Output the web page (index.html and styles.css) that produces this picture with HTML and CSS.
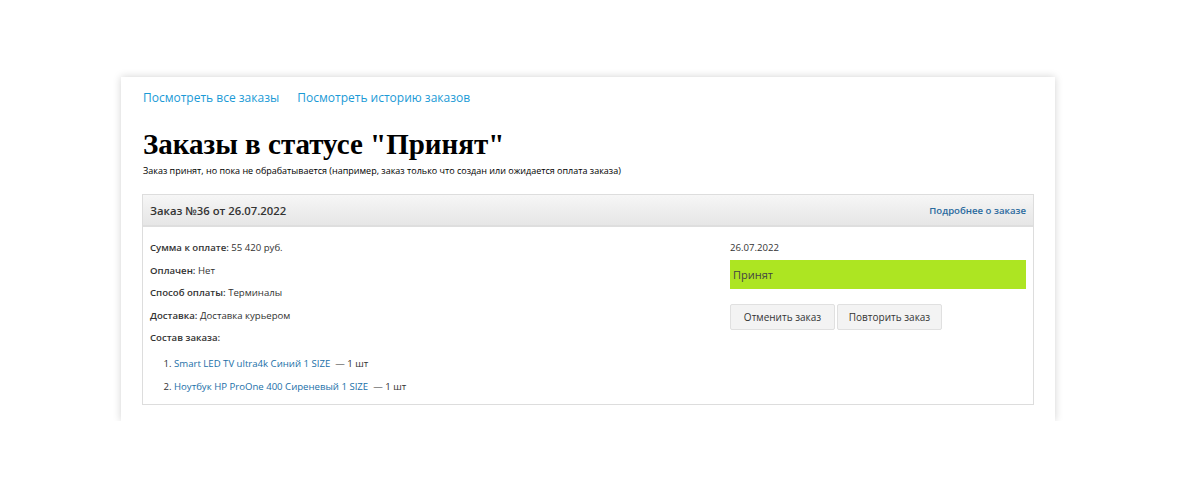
FILE: index.html
```html
<!DOCTYPE html>
<html lang="ru">
<head>
    <meta charset="UTF-8">
    <title>Заказы в статусе "Принят"</title>
    <link rel="stylesheet" href="styles.css">
</head>
<body>

    <div class="page">
        <div class="order-links">
            <a href="#">Посмотреть все заказы</a>
            <a href="#">Посмотреть историю заказов</a>
        </div>

        <h1>Заказы в статусе "Принят"</h1>
        <div class="status-desc">Заказ принят, но пока не обрабатывается (например, заказ только что создан или ожидается оплата заказа)</div>

        <div class="order-panel">
            <div class="order-head">
                <span class="order-title">Заказ №36 от 26.07.2022</span>
                <a href="#" class="order-more">Подробнее о заказе</a>
            </div>
            <div class="order-body">
                <div class="order-info">
                    <p><b>Сумма к оплате:</b> 55 420 руб.</p>
                    <p><b>Оплачен:</b> Нет</p>
                    <p><b>Способ оплаты:</b> Терминалы</p>
                    <p><b>Доставка:</b> Доставка курьером</p>
                    <p><b>Состав заказа:</b></p>
                    <ol class="order-items">
                        <li><a href="#">Smart LED TV ultra4k Синий 1 SIZE</a> &nbsp;— 1 шт</li>
                        <li><a href="#">Ноутбук HP ProOne 400 Сиреневый 1 SIZE</a> &nbsp;— 1 шт</li>
                    </ol>
                </div>
                <div class="order-side">
                    <div class="order-date">26.07.2022</div>
                    <div class="order-status">Принят</div>
                    <div class="order-actions">
                        <button type="button">Отменить заказ</button>
                        <button type="button">Повторить заказ</button>
                    </div>
                </div>
            </div>
        </div>
    </div>

</body>
</html>
```

FILE: styles.css
```css
body {
    margin: 0;
    padding: 77px 0 0 121px;
    background: #fff;
    font-family: "Open Sans", "Liberation Sans", sans-serif;
    color: #333;
}
.page {
    width: 892px;
    padding: 12px 21px 16px 21px;
    background: #fff;
    box-shadow: 0 0 8px rgba(0,0,0,0.18);
}
a { color: #1a9ad6; text-decoration: none; }
.order-links { font-size: 12px; line-height: 18px; }
.order-links a { margin-right: 15px; }
.order-links a:first-child { margin-left: 1px; }

h1 {
    font-family: "Liberation Serif", serif;
    font-size: 29px;
    font-weight: bold;
    color: #000;
    margin: 19px 0 0 1px;
    line-height: 37px;
}
.status-desc { font-size: 9px; color: #000; line-height: 14px; margin: 1px 0 16px 1px; }

.order-panel { border: 1px solid #ddd; }
.order-head {
    display: flex;
    justify-content: space-between;
    align-items: center;
    height: 30px;
    padding: 0 7px;
    background: linear-gradient(#f6f6f6, #e6e6e6);
    border-bottom: 2px solid #dedede;
}
.order-title { font-size: 11.3px; font-weight: 600; color: #333; }
.order-more { font-size: 9.6px; font-weight: 600; color: #2a6a9e; }

.order-body {
    display: grid;
    grid-template-columns: 1fr 296px;
    padding: 14px 7px 2px 7px;
    font-size: 9.6px;
}
.order-info p { margin: 0 0 8.5px 0; line-height: 14px; }
.order-info b { font-weight: 600; color: #333; }
.order-items { margin: 12px 0 0 0; padding-left: 24px; }
.order-items li { line-height: 14px; margin-bottom: 8.5px; color: #333; }
.order-items a { color: #1b6fa8; }

.order-date { line-height: 14px; color: #333; }
.order-status {
    margin-top: 5px;
    height: 29px;
    line-height: 29px;
    padding: 0 3px;
    background: #ade522;
    color: #444;
    font-size: 11px;
}
.order-actions { margin-top: 15px; display: flex; gap: 2px; }
.order-actions button {
    font-family: "Open Sans", "Liberation Sans", sans-serif;
    font-size: 10px;
    color: #333;
    height: 26px;
    width: 105px;
    background: #f3f3f3;
    border: 1px solid #e0e0e0;
    border-radius: 2px;
    cursor: pointer;
}
```
